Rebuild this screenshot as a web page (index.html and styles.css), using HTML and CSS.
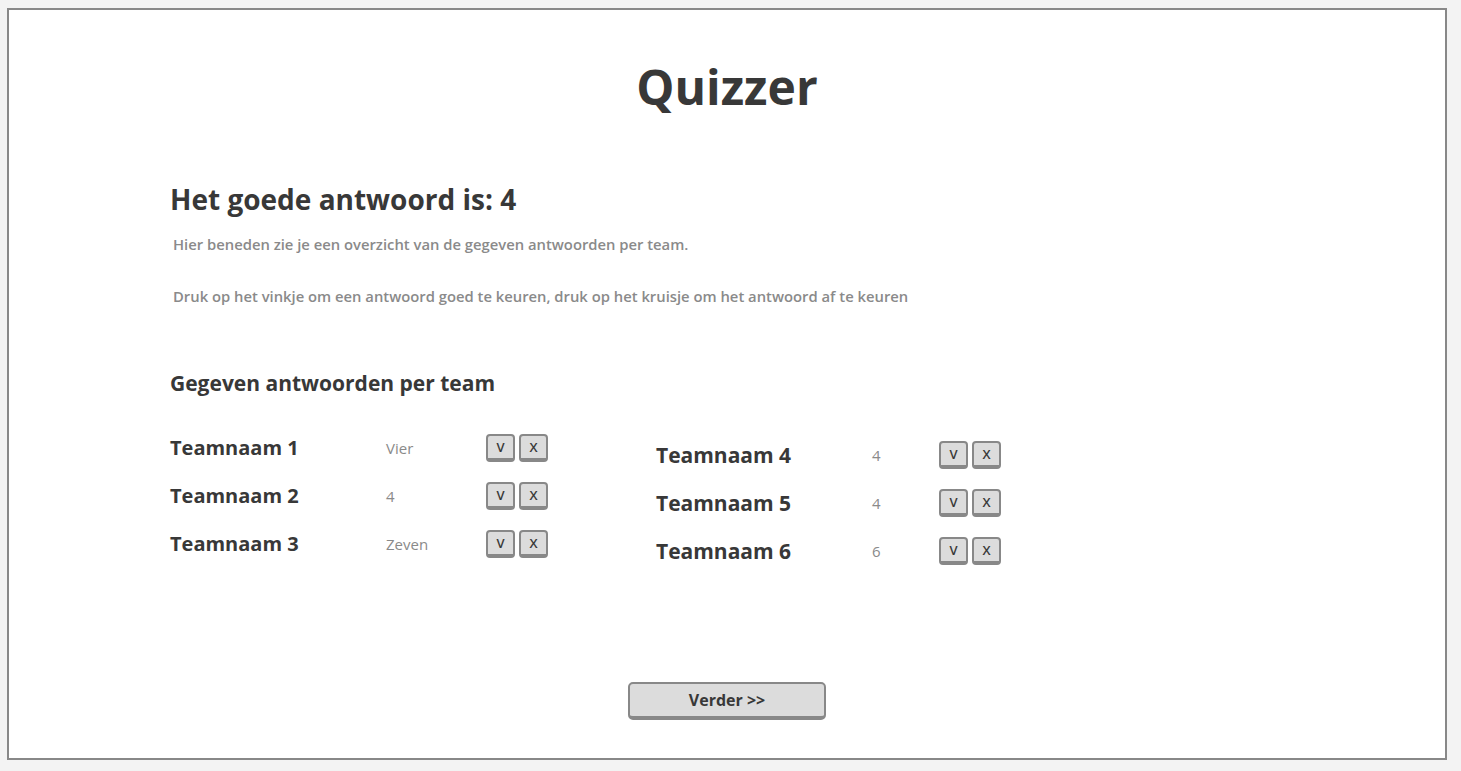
FILE: index.html
```html
<!DOCTYPE html>
<html lang="nl">
<head>
<meta charset="utf-8">
<title>Quizzer</title>
<link rel="stylesheet" href="styles.css">
</head>
<body>
<div class="frame">
  <h1 class="title">Quizzer</h1>
  <div class="content">
    <h2 class="answer">Het goede antwoord is: 4</h2>
    <p class="info">Hier beneden zie je een overzicht van de gegeven antwoorden per team.</p>
    <p class="info second">Druk op het vinkje om een antwoord goed te keuren, druk op het kruisje om het antwoord af te keuren</p>
    <h3 class="subhead">Gegeven antwoorden per team</h3>
    <div class="teams">
      <div class="col left">
        <div class="row"><span class="name">Teamnaam 1</span><span class="given">Vier</span><span class="btns"><button class="key">V</button><button class="key">X</button></span></div>
        <div class="row"><span class="name">Teamnaam 2</span><span class="given">4</span><span class="btns"><button class="key">V</button><button class="key">X</button></span></div>
        <div class="row"><span class="name">Teamnaam 3</span><span class="given">Zeven</span><span class="btns"><button class="key">V</button><button class="key">X</button></span></div>
      </div>
      <div class="col right">
        <div class="row"><span class="name">Teamnaam 4</span><span class="given">4</span><span class="btns"><button class="key">V</button><button class="key">X</button></span></div>
        <div class="row"><span class="name">Teamnaam 5</span><span class="given">4</span><span class="btns"><button class="key">V</button><button class="key">X</button></span></div>
        <div class="row"><span class="name">Teamnaam 6</span><span class="given">6</span><span class="btns"><button class="key">V</button><button class="key">X</button></span></div>
      </div>
    </div>
  </div>
  <div class="footer">
    <button class="next">Verder &gt;&gt;</button>
  </div>
</div>
</body>
</html>
```
FILE: styles.css
```css
html, body {
  margin: 0;
  padding: 0;
}
body {
  background: #f3f3f3;
  padding: 8px 0 0 7px;
  font-family: "Open Sans", Lato, sans-serif;
  color: #383838;
}
.frame {
  box-sizing: border-box;
  width: 1440px;
  height: 752px;
  border: 2px solid #888;
  background: #fff;
  display: flex;
  flex-direction: column;
}
.title {
  margin: 53px 0 0;
  font-weight: 700;
  font-size: 48px;
  line-height: 48px;
  text-align: center;
  color: #383838;
}
.content {
  padding-left: 161px;
}
.answer {
  margin: 72px 0 0;
  font-size: 28px;
  line-height: 32px;
  font-weight: 700;
}
.info {
  margin: 20px 0 0 3px;
  font-size: 14.8px;
  line-height: 18px;
  color: #8a8a8a;
  font-weight: 600;
}
.info.second {
  margin-top: 34px;
}
.subhead {
  margin: 66px 0 0;
  font-size: 21px;
  line-height: 24px;
  font-weight: 700;
}
.teams {
  display: grid;
  grid-template-columns: 486px auto;
  margin-top: 38px;
}
.col {
  display: flex;
  flex-direction: column;
  gap: 19px;
}
.col.right {
  margin-top: 7px;
}
.row {
  display: flex;
  align-items: center;
  height: 29px;
}
.name {
  width: 216px;
  font-size: 20px;
  font-weight: 700;
}
.right .name {
  font-size: 21px;
}
.given {
  font-size: 15px;
  color: #8a8a8a;
}
.left .given { width: 100px; }
.right .given { width: 67px; }
.btns {
  display: flex;
  gap: 4px;
}
.key {
  box-sizing: border-box;
  width: 29px;
  height: 28px;
  padding: 0;
  border: 2px solid #888;
  border-bottom-width: 4px;
  border-radius: 4px;
  background: #dcdcdc;
  font-family: "Open Sans", sans-serif;
  font-size: 13px;
  font-weight: 600;
  color: #383838;
}
.footer {
  margin-top: auto;
  margin-bottom: 38px;
  display: flex;
  justify-content: center;
}
.next {
  box-sizing: border-box;
  width: 198px;
  height: 38px;
  border: 2px solid #888;
  border-bottom-width: 4px;
  border-radius: 5px;
  background: #dcdcdc;
  font-family: "Open Sans", sans-serif;
  font-weight: 700;
  font-size: 16px;
  color: #383838;
  padding: 0;
}
```
